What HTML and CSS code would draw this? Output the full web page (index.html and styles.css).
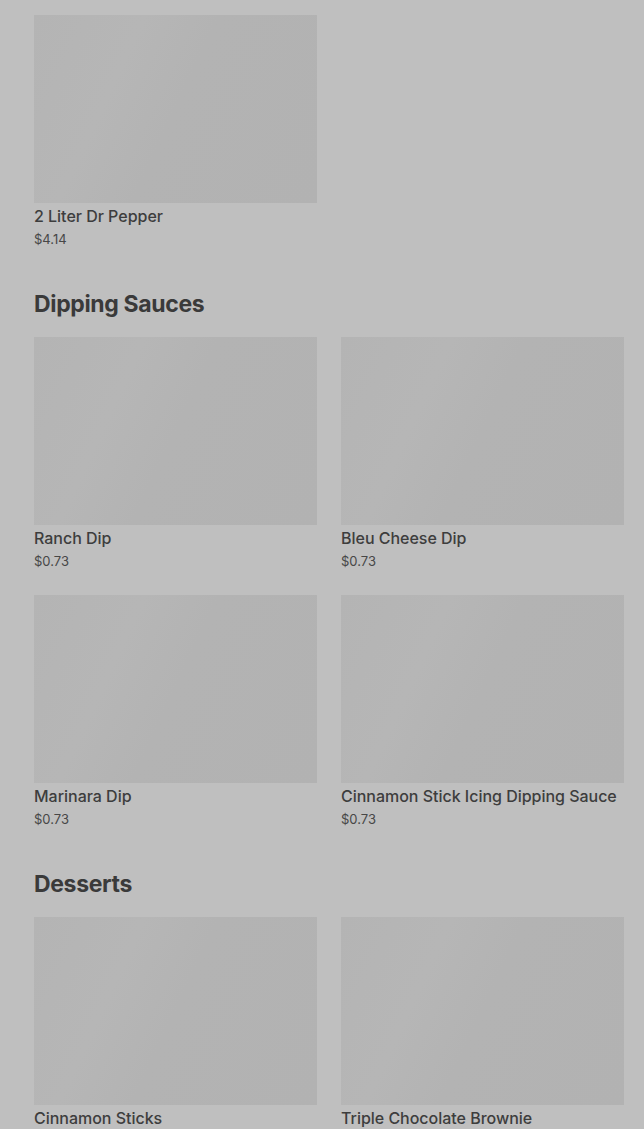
FILE: index.html
```html
<!DOCTYPE html>
<html lang="en">
<head>
  <meta charset="UTF-8" />
  <meta name="viewport" content="width=device-width, initial-scale=1.0"/>
  <title>Menu</title>
  <link rel="stylesheet" href="styles.css">
</head>
<body>
  <div class="menu">
    <section class="category">
      <div class="items">
        <div class="item">
          <div class="thumb"></div>
          <div class="name">2 Liter Dr Pepper</div>
          <div class="price">$4.14</div>
        </div>
      </div>
    </section>

    <section class="category">
      <h2>Dipping Sauces</h2>
      <div class="items">
        <div class="item">
          <div class="thumb"></div>
          <div class="name">Ranch Dip</div>
          <div class="price">$0.73</div>
        </div>
        <div class="item">
          <div class="thumb"></div>
          <div class="name">Bleu Cheese Dip</div>
          <div class="price">$0.73</div>
        </div>
        <div class="item">
          <div class="thumb"></div>
          <div class="name">Marinara Dip</div>
          <div class="price">$0.73</div>
        </div>
        <div class="item">
          <div class="thumb"></div>
          <div class="name">Cinnamon Stick Icing Dipping Sauce</div>
          <div class="price">$0.73</div>
        </div>
      </div>
    </section>

    <section class="category">
      <h2>Desserts</h2>
      <div class="items">
        <div class="item">
          <div class="thumb"></div>
          <div class="name">Cinnamon Sticks</div>
        </div>
        <div class="item">
          <div class="thumb"></div>
          <div class="name">Triple Chocolate Brownie</div>
        </div>
      </div>
    </section>
  </div>
</body>
</html>
```

FILE: styles.css
```css
* {
  box-sizing: border-box;
}

html, body {
  height: 100%;
}

body {
  margin: 0;
  padding: 0;
  font-family: Inter, 'Liberation Sans', sans-serif;
  background-color: #bfbfbf;
  color: #3b3b3b;
  overflow: hidden;
}

.menu {
  padding: 15px 20px 0 34px;
  display: flex;
  flex-direction: column;
  gap: 43px;
}

.category h2 {
  margin: 0 0 19px;
  font-size: 23px;
  line-height: 28px;
  font-weight: 700;
  letter-spacing: -0.35px;
  color: #3a3a3a;
}

.items {
  display: grid;
  grid-template-columns: 283px 283px;
  column-gap: 24px;
  row-gap: 26px;
}

.thumb {
  height: 188px;
  background: linear-gradient(115deg, #b4b4b4 0%, #b6b6b6 30%, #b3b3b3 50%, #b2b2b2 100%);
}

.name {
  margin-top: 3px;
  font-size: 16px;
  line-height: 20px;
  font-weight: 500;
  letter-spacing: -0.02px;
  color: #3d3d3d;
}

.price {
  margin-top: 5px;
  font-size: 13px;
  line-height: 16px;
  color: #474747;
}
```
